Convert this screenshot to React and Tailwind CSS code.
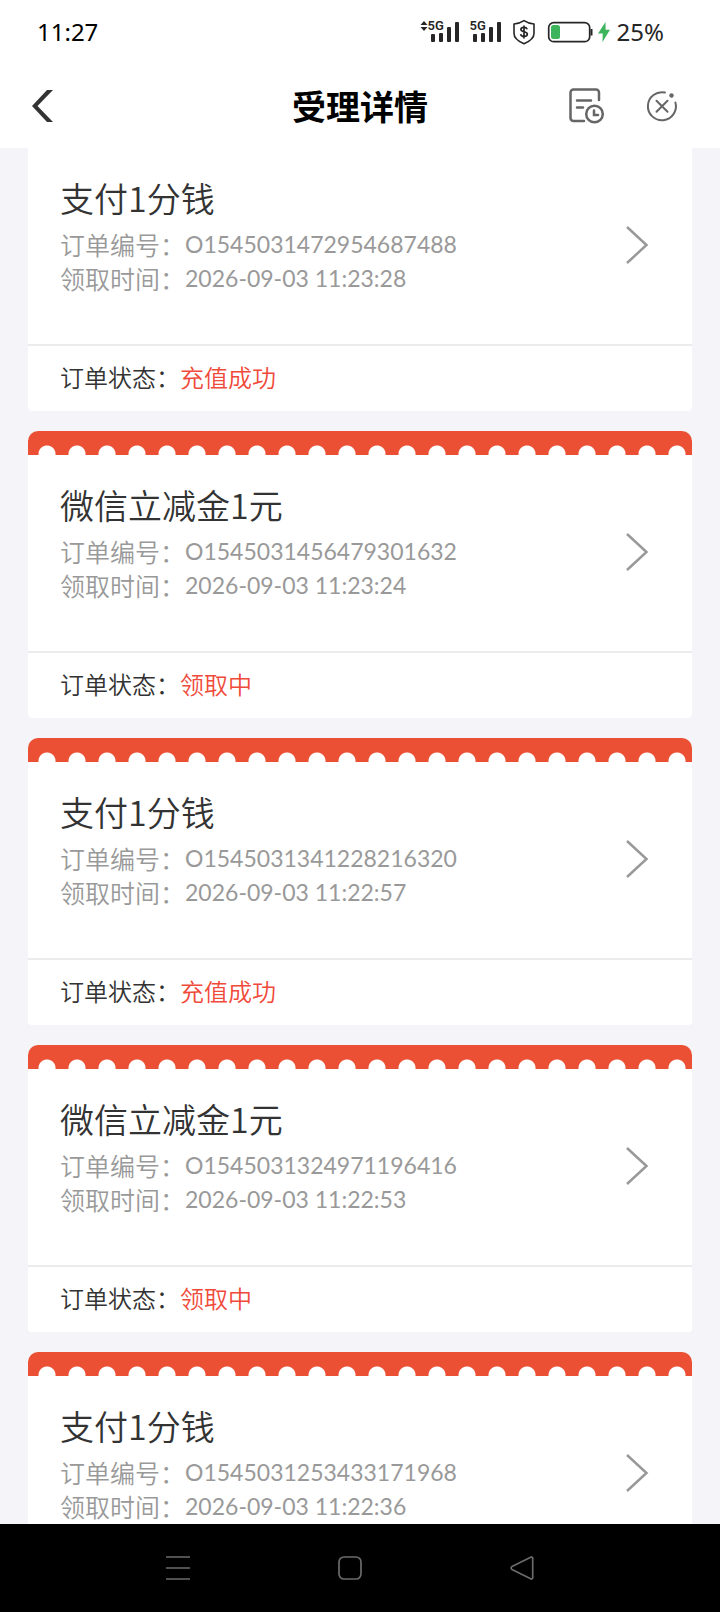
import React from "react";

const orders = [
  { title: "支付1分钱", id: "O1545031472954687488", time: "2026-09-03 11:23:28", status: "充值成功" },
  { title: "微信立减金1元", id: "O1545031456479301632", time: "2026-09-03 11:23:24", status: "领取中" },
  { title: "支付1分钱", id: "O1545031341228216320", time: "2026-09-03 11:22:57", status: "充值成功" },
  { title: "微信立减金1元", id: "O1545031324971196416", time: "2026-09-03 11:22:53", status: "领取中" },
  { title: "支付1分钱", id: "O1545031253433171968", time: "2026-09-03 11:22:36" },
];

function Signal() {
  return (
    <svg width="32" height="24" viewBox="0 0 32 24" fill="#262626" aria-hidden="true">
      <rect x="3" y="14" width="4" height="8" rx="1" />
      <rect x="11" y="13" width="4" height="9" rx="1" />
      <rect x="19" y="7" width="4" height="15" rx="1" />
      <rect x="27" y="2" width="4" height="20" rx="1" />
    </svg>
  );
}

function Network() {
  return (
    <span className="relative flex">
      <Signal />
      <span className="absolute left-0 top-0 font-['Roboto',sans-serif] text-[13px] leading-[12px] font-semibold">5G</span>
    </span>
  );
}

function StatusBar() {
  return (
    <div className="flex h-16 items-center justify-between pl-[37px] pr-14 font-['Noto_Sans',sans-serif] text-2xl text-black">
      <time>11:27</time>
      <div className="flex items-center text-[#262626]">
        <svg className="mb-3" width="8" height="10" viewBox="0 0 8 10" fill="#262626" aria-hidden="true">
          <path d="M4 0 7.5 4h-7zM4 10 .5 6h7z" />
        </svg>
        <Network />
        <span className="ml-[10px]"><Network /></span>
        <svg className="ml-[10px]" width="24" height="26" viewBox="0 0 24 26" fill="none" stroke="#262626" aria-hidden="true">
          <path d="M12 1.6c3 2 6.200 3 10 3.400v9.500c0 4.800-4.500 7.900-10 10.300C6.500 22.400 2 19.300 2 14.500V5c3.800-.4 7-1.400 10-3.400Z" strokeWidth="1.600" strokeLinejoin="round" />
          <path d="M15.200 10.300c-.5-1.300-1.600-1.900-3.200-1.900-1.800 0-3.100.8-3.100 2.200 0 3.100 6.400 1.200 6.400 4.500 0 1.500-1.400 2.400-3.300 2.400-1.800 0-3-.7-3.400-2.200M12 6.500v13" strokeWidth="1.700" />
        </svg>
        <svg className="ml-[11px]" width="46" height="24" viewBox="0 0 46 24" fill="none" aria-hidden="true">
          <rect x="1.700" y="2.700" width="41" height="19" rx="5" stroke="#262626" strokeWidth="1.700" />
          <rect x="4" y="5" width="9" height="14" rx="2.500" fill="#3cb45c" />
          <path d="M44.500 9v6.500" stroke="#262626" strokeWidth="2" />
        </svg>
        <svg className="ml-1" width="14" height="22" viewBox="0 0 14 22" fill="#3cb45c" aria-hidden="true">
          <path d="M8.500 1 1 12.500h4.700L5.500 21 13 8.800H8.600z" />
        </svg>
        <span className="ml-[6px]">25%</span>
      </div>
    </div>
  );
}

function Header() {
  return (
    <div className="grid h-[84px] grid-cols-[1fr_auto_1fr] items-center pl-7 pr-10">
      <button type="button" aria-label="返回" className="justify-self-start">
        <svg width="28" height="36" viewBox="0 0 28 36" aria-hidden="true">
          <path d="M19 2h6L9.500 18 25 34h-6L4 18z" fill="#333" />
        </svg>
      </button>
      <h1 className="pl-3 text-[34px] leading-[50px] font-bold text-black">受理详情</h1>
      <div className="flex items-center gap-[38px] justify-self-end">
        <button type="button" aria-label="记录">
          <svg width="38" height="38" viewBox="0 0 38 38" fill="none" stroke="#666" strokeWidth="2.500" strokeLinecap="round" aria-hidden="true">
            <path d="M31 13V5.500a3 3 0 0 0-3-3H5.500a3 3 0 0 0-3 3V31a3 3 0 0 0 3 3H16M9 13.500h14M9 20.500h6" />
            <circle cx="26.500" cy="27" r="8.300" />
            <path d="M26 23.500V28h4" />
          </svg>
        </button>
        <button type="button" aria-label="关闭">
          <svg width="36" height="36" viewBox="0 0 36 36" fill="none" stroke="#666" strokeWidth="2" strokeLinecap="round" aria-hidden="true">
            <path d="M21 4.600A14 14 0 1 0 31.400 14.500M12.500 12.700l11 11M23.500 12.700l-11 11" />
            <circle cx="27.500" cy="7.500" r="2.200" fill="#666" stroke="none" />
          </svg>
        </button>
      </div>
    </div>
  );
}

function Detail({ label, value }) {
  return (
    <div className="flex text-[25px] leading-[34px] font-[350] text-[#999]">
      <dt>{label}：</dt>
      <dd className="font-['Lato',sans-serif] text-[23px] font-normal">{value}</dd>
    </div>
  );
}

function OrderCard({ order }) {
  return (
    <li className="overflow-hidden rounded-t-[10px] rounded-b bg-white">
      <div className="h-6 bg-[#eb5034] bg-[radial-gradient(circle_at_15px_23px,#fff_8px,transparent_9px)] bg-size-[30px_24px] bg-position-[4px_0px]" />
      <a href="#order" className="flex items-start justify-between border-b-2 border-[#ebebee] pl-8 pr-[43px] pt-[27px] pb-[49px]">
        <div>
          <h2 className="text-[34px] leading-[46px] font-[350] text-[#333]">{order.title}</h2>
          <dl className="mt-[6px]">
            <Detail label="订单编号" value={order.id} />
            <Detail label="领取时间" value={order.time} />
          </dl>
        </div>
        <svg className="mt-[50px]" width="24" height="40" viewBox="0 0 24 40" fill="none" stroke="#999" strokeWidth="2.500" aria-hidden="true">
          <path d="M2 2 21.500 20 2 38" />
        </svg>
      </a>
      {order.status && (
        <p className="flex h-[65px] items-center px-8 pb-1 text-2xl font-[350] text-[#333]">
          <span>订单状态：</span>
          <span className="text-[#f04a3a]">{order.status}</span>
        </p>
      )}
    </li>
  );
}

function NavBar() {
  return (
    <nav className="grid h-[88px] shrink-0 grid-cols-3 items-center justify-items-center bg-black pl-[92px] pr-[112px]">
      <button type="button" aria-label="菜单">
        <svg width="28" height="28" viewBox="0 0 28 28" stroke="#6b6b6b" strokeWidth="1.700" aria-hidden="true">
          <path d="M2 3h24M2 14h24M2 25h24" />
        </svg>
      </button>
      <button type="button" aria-label="主页">
        <svg width="28" height="28" viewBox="0 0 28 28" fill="none" stroke="#6b6b6b" strokeWidth="1.700" aria-hidden="true">
          <rect x="3" y="3" width="22" height="22" rx="5" />
        </svg>
      </button>
      <button type="button" aria-label="后退">
        <svg width="28" height="28" viewBox="0 0 28 28" fill="none" stroke="#6b6b6b" strokeWidth="1.700" strokeLinejoin="round" aria-hidden="true">
          <path d="M22.700 3.200 4 12.600a1.600 1.600 0 0 0 0 2.800l18.700 9.400a1.300 1.300 0 0 0 2-1.200V4.400a1.300 1.300 0 0 0-2-1.200Z" />
        </svg>
      </button>
    </nav>
  );
}

export default function App() {
  return (
    <div lang="zh-CN" className="flex h-screen flex-col bg-[#f4f4f9] font-['Noto_Sans_CJK_SC',sans-serif]">
      <header className="shrink-0 bg-white">
        <StatusBar />
        <Header />
      </header>
      <main className="min-h-0 flex-1 overflow-y-auto [scrollbar-width:none]">
        <ul className="-mt-6 flex flex-col gap-5 px-7">
          {orders.map((order) => (
            <OrderCard key={order.id} order={order} />
          ))}
        </ul>
      </main>
      <NavBar />
    </div>
  );
}
